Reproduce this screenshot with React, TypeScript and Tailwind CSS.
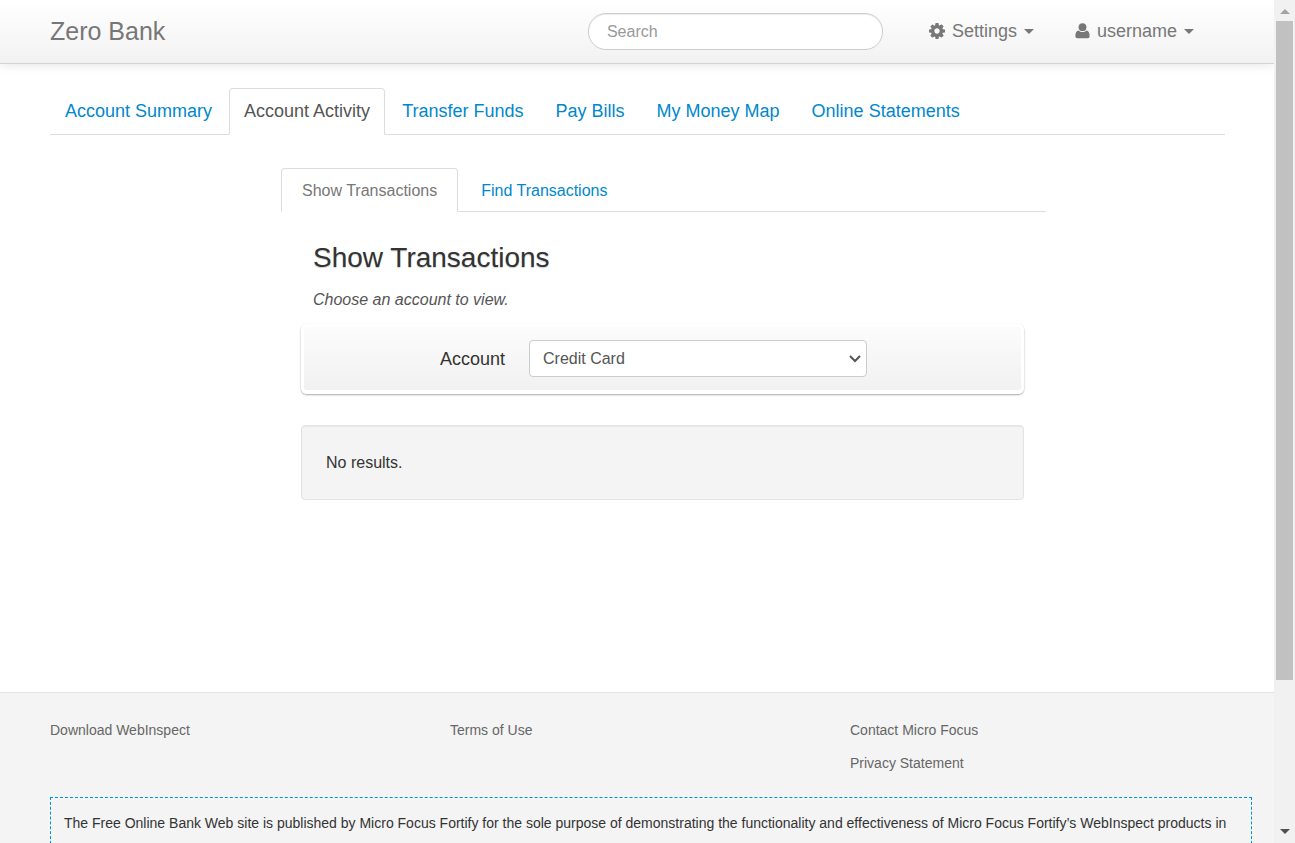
import type { ReactNode } from "react";

const MAIN_TABS = [
  "Account Summary",
  "Account Activity",
  "Transfer Funds",
  "Pay Bills",
  "My Money Map",
  "Online Statements",
];

const FOOTER_LINKS = [
  ["Download WebInspect"],
  ["Terms of Use"],
  ["Contact Micro Focus", "Privacy Statement"],
];

function CogIcon() {
  return (
    <svg viewBox="0 0 1536 1536" className="size-4 fill-current" aria-hidden="true">
      <path
        fillRule="evenodd"
        transform="translate(0 1408) scale(1 -1)"
        d="M1024 640q0 -106 -75 -181t-181 -75t-181 75t-75 181t75 181t181 75t181 -75t75 -181zM1536 749v-222q0 -12 -8 -23t-20 -13l-185 -28q-19 -54 -39 -91q35 -50 107 -138q10 -12 10 -25t-9 -23q-27 -37 -99 -108t-94 -71q-12 0 -26 9l-138 108q-44 -23 -91 -38q-16 -136 -29 -186q-7 -28 -36 -28h-222q-14 0 -24.5 8.5t-11.5 21.5l-28 184q-49 16 -90 37l-141 -107q-10 -9 -25 -9q-14 0 -25 11q-126 114 -165 168q-7 10 -7 23q0 12 8 23q15 21 51 66.5t54 70.5q-27 50 -41 99l-183 27q-13 2 -21 12.5t-8 23.5v222q0 12 8 23t19 13l186 28q14 46 39 92q-40 57 -107 138q-10 12 -10 24q0 10 9 23q26 36 98.5 107.5t94.5 71.5q13 0 26 -10l138 -107q44 23 91 38q16 136 29 186q7 28 36 28h222q14 0 24.5 -8.5t11.5 -21.5l28 -184q49 -16 90 -37l142 107q9 9 24 9q13 0 25 -10q129 -119 165 -170q7 -8 7 -22q0 -12 -8 -23q-15 -21 -51 -66.5t-54 -70.5q26 -50 41 -98l183 -28q13 -2 21 -12.5t8 -23.5z"
      />
    </svg>
  );
}

function UserIcon() {
  return (
    <svg viewBox="0 0 15 16" className="h-4 w-[15px] fill-current" aria-hidden="true">
      <circle cx="7.5" cy="4.2" r="3.9" />
      <path d="M3.6 7.4C1.2 7.8.4 9.8.4 13c0 1.3.8 2.3 2.1 2.3h10c1.300 0 2.100-1 2.100-2.300 0-3.200-.8-5.200-3.200-5.600C10.400 8.400 9 9 7.500 9S4.600 8.400 3.600 7.400z" />
    </svg>
  );
}

function MenuButton({ icon, label }: { icon: ReactNode; label: string }) {
  return (
    <button type="button" className="flex items-center text-lg leading-6 text-[#777777]">
      {icon}
      <span className="ml-[7px]">{label}</span>
      <svg viewBox="0 0 10 5" className="ml-[7px] h-[5px] w-[10px] fill-current" aria-hidden="true">
        <path d="M0 0h10L5 5z" />
      </svg>
    </button>
  );
}

function Header() {
  return (
    <header className="flex h-16 shrink-0 items-center border-b border-[#d4d4d4] bg-linear-to-b from-white to-[#f2f2f2] pr-20 pb-px pl-[50px] shadow-[0_1px_10px_rgba(0,0,0,0.1)]">
      <a href="#home" className="text-[25px] leading-8 text-[#777777]">
        Zero Bank
      </a>
      <input
        type="text"
        aria-label="Search"
        placeholder="Search"
        className="ml-auto h-[37px] w-[295px] rounded-[18px] border border-[#cccccc] bg-white px-[18px] pt-px text-base text-[#555555] shadow-[inset_0_1px_1px_rgba(0,0,0,0.075)] outline-none placeholder:text-[#999999]"
      />
      <nav className="ml-[46px] flex items-center gap-[41px]">
        <MenuButton icon={<CogIcon />} label="Settings" />
        <MenuButton icon={<UserIcon />} label="username" />
      </nav>
    </header>
  );
}

function MainTabs() {
  return (
    <nav className="flex gap-[2px] border-b border-[#dddddd] text-lg leading-6">
      {MAIN_TABS.map((tab) => (
        <a
          key={tab}
          href="#tab"
          className={
            tab === "Account Activity"
              ? "-mb-px rounded-t border border-[#dddddd] border-b-white bg-white px-[14px] pt-[10px] pb-[11px] text-[#555555]"
              : "-mb-px border border-transparent px-[14px] pt-[10px] pb-[11px] text-[#0088cc]"
          }
        >
          {tab}
        </a>
      ))}
    </nav>
  );
}

function Transactions() {
  return (
    <section className="mt-[33px] mr-[179px] ml-[231px]">
      <nav className="flex gap-[2px] border-b border-[#dddddd] text-base leading-6">
        <a
          href="#show"
          className="-mb-px rounded-t border border-[#dddddd] border-b-white bg-white px-5 pt-[10px] pb-2 text-[#777777]"
        >
          Show Transactions
        </a>
        <a
          href="#find"
          className="-mb-px border border-transparent px-5 pt-[10px] pb-2 text-[#0088cc]"
        >
          Find Transactions
        </a>
      </nav>
      <div className="pt-6 pr-[22px] pl-5">
        <h2 className="px-3 text-[28px] leading-11 text-[#333333] [text-shadow:0_1px_1px_rgba(0,0,0,0.2)]">
          Show Transactions
        </h2>
        <p className="mt-2 px-3 text-base leading-6 text-[#555555] italic">
          Choose an account to view.
        </p>
        <form className="mt-3 flex items-center rounded-md border-[3px] border-b-4 border-white bg-linear-to-b from-[#fcfcfc] to-[#f1f1f1] bg-clip-padding py-[13px] shadow-[0_1px_2px_rgba(0,0,0,0.35)]">
          <label
            htmlFor="account"
            className="w-[201px] text-right text-lg leading-6 text-[#333333]"
          >
            Account
          </label>
          <div className="relative ml-6">
            <select
              id="account"
              className="h-[37px] w-[338px] appearance-none rounded border border-[#cccccc] bg-white px-[13px] pt-px text-base text-[#555555]"
            >
              <option>Credit Card</option>
            </select>
            <svg
              viewBox="0 0 12 8"
              className="pointer-events-none absolute top-[15px] right-[6px] h-2 w-3"
              aria-hidden="true"
            >
              <path d="M1 1l5 5 5-5" fill="none" stroke="#555555" strokeWidth="2" />
            </svg>
          </div>
        </form>
        <div className="mt-[31px] rounded border border-[#e3e3e3] bg-[#f4f4f4] px-6 pt-[25px] pb-6 text-base leading-6 text-[#333333] shadow-[inset_0_1px_1px_rgba(0,0,0,0.05)]">
          No results.
        </div>
      </div>
    </section>
  );
}

function Footer() {
  return (
    <footer className="mt-48 grow border-t border-[#e5e5e5] bg-[#f4f4f4] pt-[26px] pr-[22px] pl-[50px] text-sm leading-[22px]">
      <div className="mr-[2px] grid grid-cols-3">
        {FOOTER_LINKS.map((links) => (
          <ul key={links[0]} className="flex flex-col gap-[11px]">
            {links.map((link) => (
              <li key={link}>
                <a href="#link" className="text-[#666666]">
                  {link}
                </a>
              </li>
            ))}
          </ul>
        ))}
      </div>
      <p className="mt-[23px] border border-dashed border-[#0096d6] px-[13px] pt-[14px] pb-12 text-[#333333]">
        The Free Online Bank Web site is published by Micro Focus Fortify for the sole purpose of
        demonstrating the functionality and effectiveness of Micro Focus Fortify’s WebInspect
        products in
      </p>
    </footer>
  );
}

function ScrollBar() {
  return (
    <div
      className="flex w-[21px] shrink-0 flex-col items-center bg-[#f1f1f1] pt-[9px] pb-[9px]"
      aria-hidden="true"
    >
      <svg viewBox="0 0 10 5" className="h-[5px] w-[10px] shrink-0 fill-[#a3a3a3]">
        <path d="M0 5h10L5 0z" />
      </svg>
      <div className="mt-[7px] flex w-full grow flex-col items-center">
        <div className="h-[81.5%] w-[17px] bg-[#c1c1c1]" />
      </div>
      <svg viewBox="0 0 10 5" className="h-[5px] w-[10px] shrink-0 fill-[#505050]">
        <path d="M0 0h10L5 5z" />
      </svg>
    </div>
  );
}

export default function App() {
  return (
    <div className="flex h-screen overflow-hidden bg-white font-['Liberation_Sans',Arial,sans-serif]">
      <div className="flex min-w-0 grow flex-col overflow-hidden">
        <Header />
        <main className="pt-6 pr-[49px] pl-[50px]">
          <MainTabs />
          <Transactions />
        </main>
        <Footer />
      </div>
      <ScrollBar />
    </div>
  );
}
